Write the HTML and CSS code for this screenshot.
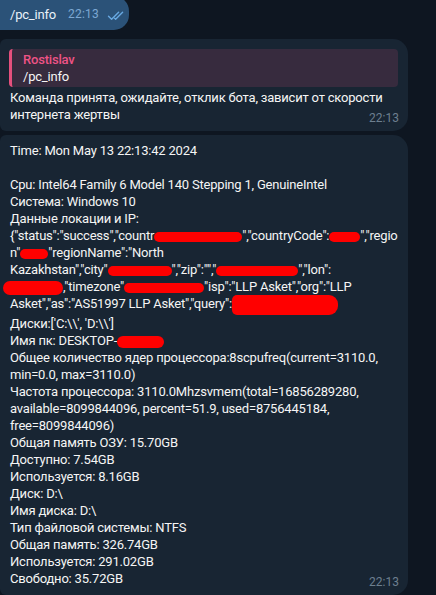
FILE: index.html
```html
<!DOCTYPE html>
<html lang="ru">
<head>
<meta charset="utf-8">
<title>Chat</title>
<link rel="stylesheet" href="styles.css">
</head>
<body>
<div class="chat">
  <div class="msg out">
    <span class="out-text">/pc_info</span>
    <span class="meta">
      <span class="out-time">22:13</span>
      <svg class="checks" width="18" height="10" viewBox="0 0 18 10"><path d="M1.5 5.2 L4.6 8.3 L11.6 1.3" /><path d="M7.6 7.3 L8.6 8.3 L15.6 1.3" /></svg>
    </span>
  </div>

  <div class="msg in first">
    <div class="reply">
      <div class="reply-name">Rostislav</div>
      <div class="reply-text">/pc_info</div>
    </div>
    <p class="body">Команда принята, ожидайте, отклик бота, зависит от скорости<br>интернета жертвы<span class="time">22:13</span></p>
  </div>

  <div class="msg in second">
    <p class="body">Time: Mon May 13 22:13:42 2024<br><br>Cpu: Intel64 Family 6 Model 140 Stepping 1, GenuineIntel<br>Система: Windows 10<br>Данные локации и IP:<br>{"status":"success","countr<span class="redact w88"></span>","countryCode":<span class="redact w31"></span>","regio<br>n"<span class="redact w28"></span>"regionName":"North<br>Kazakhstan","city"<span class="redact w64"></span>","zip":"","<span class="redact w82"></span>","lon":<br><span class="redact big w60"></span>,"timezone"<span class="redact w80"></span>"isp":"LLP Asket","org":"LLP<br>Asket","as":"AS51997 LLP Asket","query":<span class="redact tall w106"></span><br>Диски:['C:\\', 'D:\\']<br>Имя пк: DESKTOP-<span class="redact mid w47"></span><br>Общее количество ядер процессора:8scpufreq(current=3110.0,<br>min=0.0, max=3110.0)<br>Частота процессора: 3110.0Mhzsvmem(total=16856289280,<br>available=8099844096, percent=51.9, used=8756445184,<br>free=8099844096)<br>Общая память ОЗУ: 15.70GB<br>Доступно: 7.54GB<br>Используется: 8.16GB<br>Диск: D:\<br>Имя диска: D:\<br>Тип файловой системы: NTFS<br>Общая память: 326.74GB<br>Используется: 291.02GB<br>Свободно: 35.72GB<span class="time">22:13</span></p>
  </div>
</div>
</body>
</html>
```

FILE: styles.css
```css
html, body {
  margin: 0;
  padding: 0;
}

body {
  background: #0e1621;
  font-family: Roboto, "Open Sans", sans-serif;
  font-size: 13px;
  line-height: 17px;
  letter-spacing: -0.2px;
  color: #f5f5f5;
  overflow: hidden;
}

.chat {
  display: flex;
  flex-direction: column;
  align-items: flex-start;
  margin-top: -4px;
}

.msg {
  box-sizing: border-box;
}

/* outgoing */
.out {
  background: #2b5278;
  border-radius: 0 15px 15px 0;
  display: flex;
  align-items: flex-end;
  padding: 10px 4px 7px 10px;
}

.out-text {
  color: #e9f1f8;
}

.meta {
  display: flex;
  align-items: center;
  margin-left: 12px;
}

.out-time {
  font-size: 12px;
  letter-spacing: 0.2px;
  color: #7da8d3;
}

.checks {
  margin-left: 8px;
  margin-bottom: -2px;
  fill: none;
  stroke: #68a9e2;
  stroke-width: 1.4;
  stroke-linecap: round;
  stroke-linejoin: round;
}

/* incoming */
.in {
  width: 408px;
  background: #182533;
  border-radius: 6px 15px 15px 6px;
  padding: 7px 9px 4px 10px;
}

.first {
  margin-top: 9px;
}

.second {
  margin-top: 4px;
}

.reply {
  margin: 3px 1px 2px -1px;
  padding: 2px 8px 2px 11px;
  background: #372b3e;
  border-left: 3px solid #e5507d;
  border-radius: 4px;
  box-sizing: border-box;
}

.reply-name {
  color: #ee5386;
  font-weight: 500;
}

.reply-text {
  color: #f5f5f5;
}

.body {
  margin: 0;
  white-space: nowrap;
}

.time {
  float: right;
  margin-top: 4px;
  font-size: 12px;
  letter-spacing: 0;
  color: #6d7f8f;
}

/* red marker scribbles hiding private data */
.redact {
  display: inline-block;
  height: 10px;
  vertical-align: middle;
  background: #ff0000;
  border-radius: 5px;
}

.redact.big {
  height: 14px;
  margin-left: -7px;
  border-radius: 7px;
}

.redact.mid {
  height: 12px;
  border-radius: 6px;
}

.redact.tall {
  height: 20px;
  border-radius: 5px 9px 9px 5px;
}

.w28 { width: 28px; }
.w31 { width: 31px; }
.w47 { width: 47px; }
.w60 { width: 60px; }
.w64 { width: 64px; }
.w80 { width: 80px; }
.w82 { width: 82px; }
.w88 { width: 88px; }
.w106 { width: 106px; }
```
